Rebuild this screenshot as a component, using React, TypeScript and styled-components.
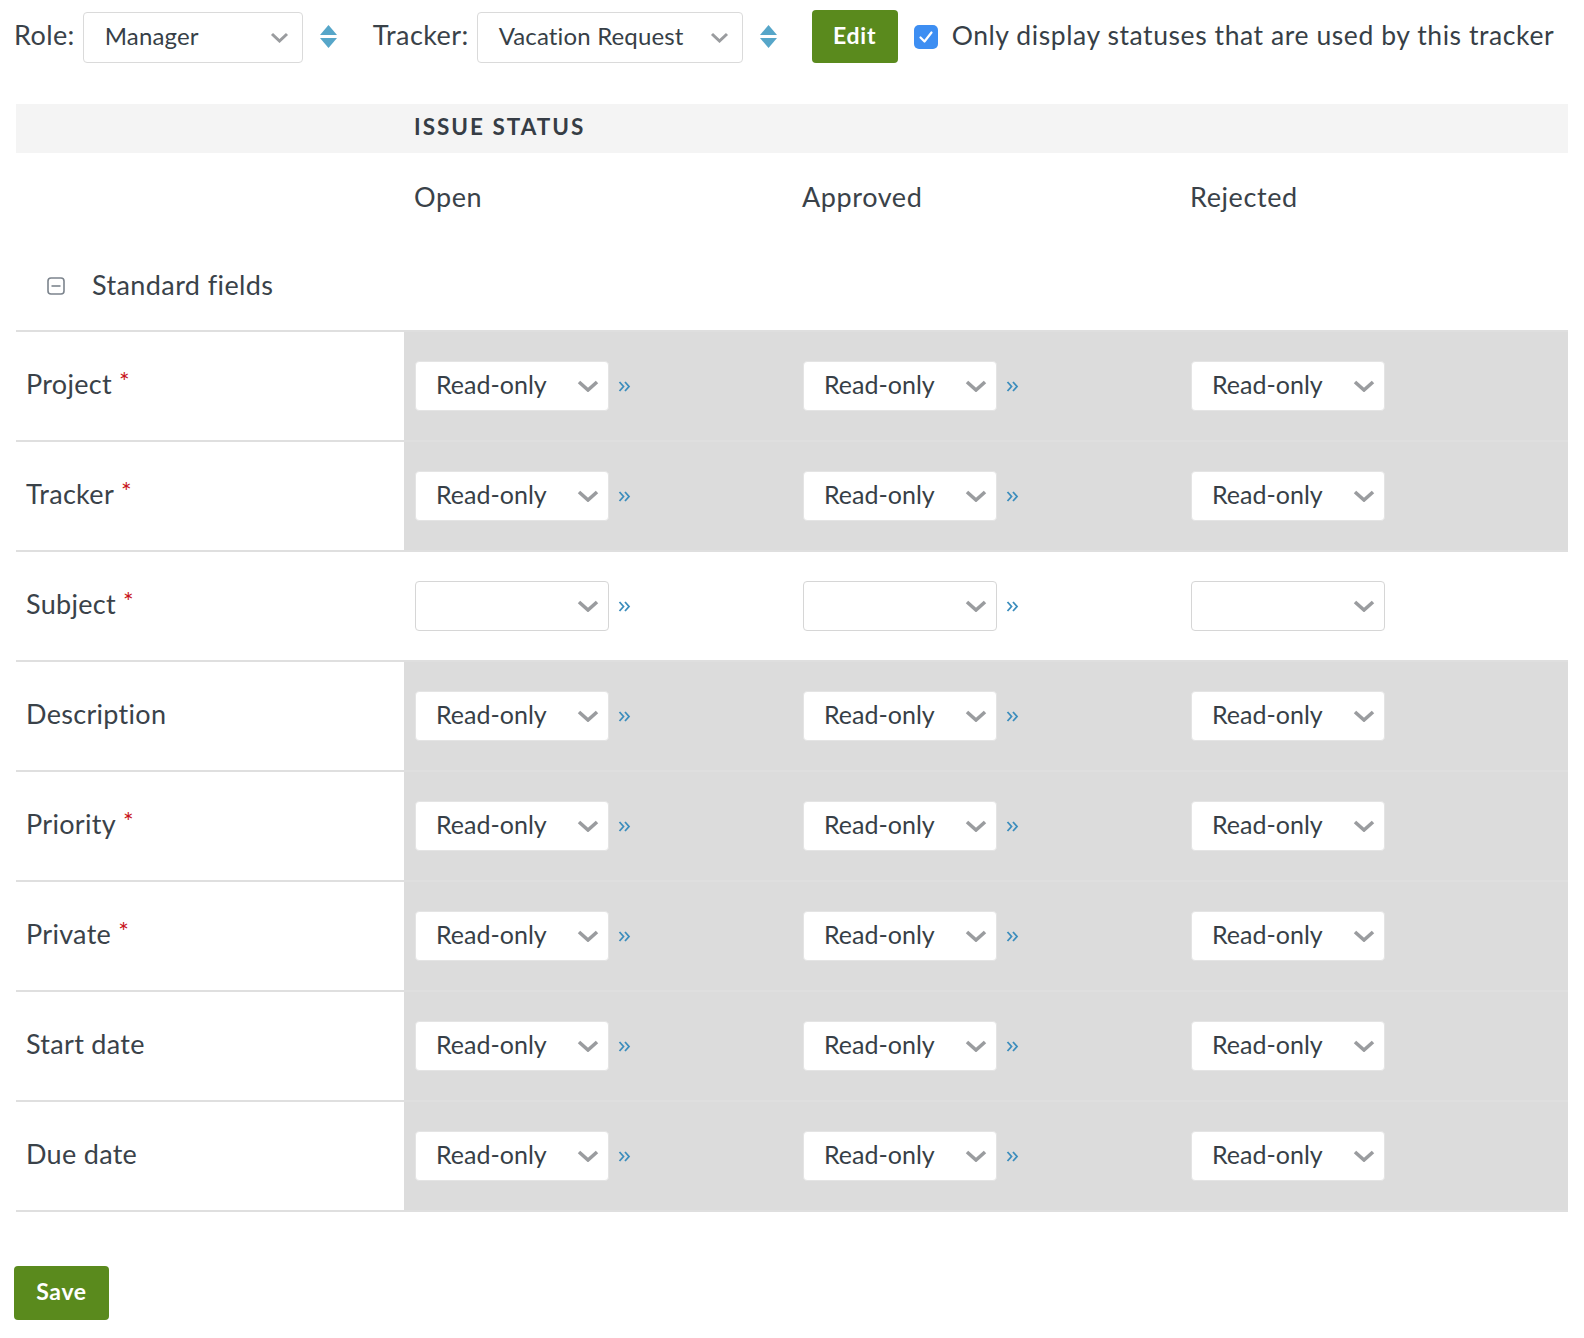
import React from 'react';
import styled, { createGlobalStyle } from 'styled-components';

const Global = createGlobalStyle`
  html, body { margin: 0; padding: 0; background: #ffffff; }
  body {
    font-family: Lato, "Open Sans", "Liberation Sans", sans-serif;
    color: #373f47;
    -webkit-font-smoothing: antialiased;
  }
`;

const Page = styled.div`
  padding: 10px 0 0 14px;
  width: 1570px;
`;

const Toolbar = styled.div`
  display: flex;
  align-items: center;
  height: 53px;
`;

const ToolLabel = styled.span`
  font-size: 27px;
  letter-spacing: 0.4px;
  margin-right: 8px;
  padding-bottom: 4px;
  color: #3a4249;
`;

const TopSelect = styled.div<{ $w: number }>`
  width: ${(p) => p.$w}px;
  height: 51px;
  margin-top: 2px;
  box-sizing: border-box;
  border: 1px solid #dadada;
  border-radius: 4px;
  display: flex;
  align-items: center;
  justify-content: space-between;
  padding: 0 13px 0 21px;
  font-size: 24px;
  letter-spacing: 0.15px;
  color: #373f47;
  background: #fff;
`;

const SelectText = styled.span<{ $pb: number }>`
  padding-bottom: ${(p) => p.$pb}px;
`;

const SortIcon = styled.svg<{ $ml: number; $mr: number }>`
  margin-left: ${(p) => p.$ml}px;
  margin-right: ${(p) => p.$mr}px;
  flex: none;
`;

const GreenButton = styled.button<{ $w: number; $h: number }>`
  width: ${(p) => p.$w}px;
  height: ${(p) => p.$h}px;
  background: #5a8a1d;
  border: none;
  border-radius: 4px;
  color: #fff;
  font-family: Lato, "Open Sans", sans-serif;
  font-weight: 700;
  font-size: 23px;
  letter-spacing: 0.7px;
  padding: 0 0 4px 0;
  cursor: pointer;
`;

const CheckBox = styled.span`
  width: 24px;
  height: 24px;
  border-radius: 5px;
  background: #3d8ef2;
  display: inline-flex;
  align-items: center;
  justify-content: center;
  margin-left: 16px;
  margin-right: 14px;
  flex: none;
`;

const CheckText = styled.span`
  font-size: 26.5px;
  letter-spacing: 0.58px;
  padding-bottom: 4px;
  color: #373f47;
`;

const Table = styled.div`
  margin-top: 41px;
  margin-left: 2px;
  width: 1552px;
`;

const GridRow = styled.div`
  display: grid;
  grid-template-columns: repeat(4, 388px);
`;

const HeaderBand = styled(GridRow)`
  height: 49px;
  background: #f4f4f4;
  align-items: center;
`;

const HeaderTitle = styled.div`
  grid-column: 2 / span 3;
  padding-left: 10px;
  padding-bottom: 4px;
  font-weight: 700;
  font-size: 22.5px;
  letter-spacing: 2px;
  text-transform: uppercase;
  color: #363d45;
`;

const StatusRow = styled(GridRow)`
  height: 88px;
  align-items: center;
`;

const StatusName = styled.div`
  padding-left: 10px;
  padding-bottom: 2px;
  font-size: 27px;
  letter-spacing: 0.6px;
  color: #3a4249;
`;

const GroupRow = styled.div`
  height: 89px;
  display: flex;
  align-items: center;
  padding-left: 31px;
  font-size: 27px;
  letter-spacing: 0.4px;
  color: #3a4249;
`;

const GroupText = styled.span`
  padding-bottom: 3px;
`;

const GroupIcon = styled.svg`
  margin-right: 27px;
  flex: none;
`;

const FieldRow = styled(GridRow)<{ $last?: boolean }>`
  height: 110px;
  box-sizing: border-box;
  border-top: 2px solid #dfdfdf;
  ${(p) => (p.$last ? 'border-bottom: 2px solid #dfdfdf; height: 112px;' : '')}
`;

const FieldLabel = styled.div`
  display: flex;
  align-items: center;
  padding-left: 10px;
  padding-bottom: 5px;
  font-size: 27px;
  letter-spacing: 0.3px;
  color: #3a4249;
  background: #fff;
`;

const Required = styled.span`
  color: #c8141b;
  font-size: 25px;
  margin-left: 7px;
  transform: translateY(-3px);
`;

const RuleCell = styled.div<{ $shaded: boolean }>`
  display: flex;
  align-items: center;
  padding-left: 11px;
  background: ${(p) => (p.$shaded ? '#dcdcdc' : '#ffffff')};
`;

const RuleSelect = styled.div<{ $empty: boolean }>`
  width: 194px;
  height: 50px;
  box-sizing: border-box;
  border: 1px solid ${(p) => (p.$empty ? '#d6d6d6' : '#e4e4e4')};
  border-radius: 4px;
  background: #fff;
  display: flex;
  align-items: center;
  justify-content: space-between;
  padding: 0 9px 0 20px;
  font-size: 25px;
  color: #373f47;
`;

const Forward = styled.svg`
  margin-left: 9px;
  flex: none;
`;

const Footer = styled.div`
  margin-top: 54px;
`;

const Chevron = ({ w, h, sw }: { w: number; h: number; sw: number }) => (
  <svg width={w} height={h} viewBox={`0 0 ${w} ${h}`} style={{ flex: 'none' }}>
    <polyline
      points={`2,2 ${w / 2},${h - 2} ${w - 2},2`}
      fill="none"
      stroke="#9a9c9f"
      strokeWidth={sw}
      strokeLinecap="butt"
      strokeLinejoin="miter"
    />
  </svg>
);

const Sort = ({ ml, mr }: { ml: number; mr: number }) => (
  <SortIcon $ml={ml} $mr={mr} width="17" height="23" viewBox="0 0 17 23">
    <polygon points="8.5,0 17,10 0,10" fill="#56a6c9" />
    <polygon points="0,13 17,13 8.5,23" fill="#56a6c9" />
  </SortIcon>
);

type Field = { name: string; required: boolean; empty?: boolean };

const fields: Field[] = [
  { name: 'Project', required: true },
  { name: 'Tracker', required: true },
  { name: 'Subject', required: true, empty: true },
  { name: 'Description', required: false },
  { name: 'Priority', required: true },
  { name: 'Private', required: true },
  { name: 'Start date', required: false },
  { name: 'Due date', required: false },
];

const statuses = ['Open', 'Approved', 'Rejected'];

export default function App() {
  return (
    <>
      <Global />
      <Page>
        <Toolbar>
          <ToolLabel>Role:</ToolLabel>
          <TopSelect $w={220}>
            <SelectText $pb={4}>Manager</SelectText>
            <Chevron w={19} h={11} sw={3} />
          </TopSelect>
          <Sort ml={17} mr={36} />
          <ToolLabel>Tracker:</ToolLabel>
          <TopSelect $w={266}>
            <SelectText $pb={4}>Vacation Request</SelectText>
            <Chevron w={19} h={11} sw={3} />
          </TopSelect>
          <Sort ml={17} mr={35} />
          <GreenButton $w={86} $h={53}>Edit</GreenButton>
          <CheckBox>
            <svg width="16" height="14" viewBox="0 0 16 14">
              <polyline points="2.5,7.5 6.5,11.5 13.5,2.5" fill="none" stroke="#fff" strokeWidth="2.2" strokeLinecap="round" strokeLinejoin="round" />
            </svg>
          </CheckBox>
          <CheckText>Only display statuses that are used by this tracker</CheckText>
        </Toolbar>

        <Table>
          <HeaderBand>
            <HeaderTitle>Issue status</HeaderTitle>
          </HeaderBand>
          <StatusRow>
            <div />
            {statuses.map((s) => (
              <StatusName key={s}>{s}</StatusName>
            ))}
          </StatusRow>
          <GroupRow>
            <GroupIcon width="18" height="18" viewBox="0 0 18 18">
              <rect x="1" y="1" width="16" height="16" rx="3" fill="none" stroke="#7c848d" strokeWidth="1.6" />
              <line x1="4.5" y1="9" x2="13.5" y2="9" stroke="#7c848d" strokeWidth="1.6" />
            </GroupIcon>
            <GroupText>Standard fields</GroupText>
          </GroupRow>
          {fields.map((f, i) => (
            <FieldRow key={f.name} $last={i === fields.length - 1}>
              <FieldLabel>
                {f.name}
                {f.required && <Required>*</Required>}
              </FieldLabel>
              {statuses.map((s, j) => (
                <RuleCell key={s} $shaded={!f.empty}>
                  <RuleSelect $empty={!!f.empty}>
                    <SelectText $pb={5}>{f.empty ? '' : 'Read-only'}</SelectText>
                    <Chevron w={22} h={12} sw={3.6} />
                  </RuleSelect>
                  {j < statuses.length - 1 && (
                    <Forward width="13" height="11" viewBox="0 0 13 11">
                      <polyline points="1.5,1 5.5,5.5 1.5,10" fill="none" stroke="#3b8dbd" strokeWidth="1.8" />
                      <polyline points="7,1 11,5.5 7,10" fill="none" stroke="#3b8dbd" strokeWidth="1.8" />
                    </Forward>
                  )}
                </RuleCell>
              ))}
            </FieldRow>
          ))}
        </Table>

        <Footer>
          <GreenButton $w={95} $h={54}>Save</GreenButton>
        </Footer>
      </Page>
    </>
  );
}
